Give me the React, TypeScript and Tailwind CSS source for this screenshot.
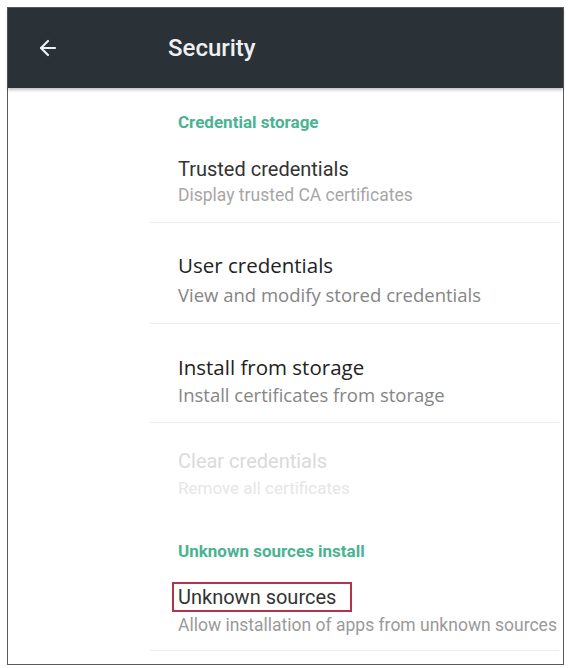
import { ArrowLeft } from "lucide-react";

const roboto = { fontFamily: "Roboto, 'Noto Sans', sans-serif" };
const openSans = { fontFamily: "'Open Sans', 'Noto Sans', sans-serif" };

function Divider({ className = "" }: { className?: string }) {
  return <div className={`ml-[142px] mr-[4px] h-px bg-[#ececec] ${className}`} />;
}

export default function App() {
  return (
    <div className="h-[668px] w-[568px] bg-white pl-[7px] pt-[7px]" style={roboto}>
      <div className="flex h-[658px] w-[557px] flex-col border border-[#5a5a5a] bg-white">
        {/* app bar */}
        <div className="flex h-[80px] shrink-0 items-center bg-[#2a3238] shadow-[0_2px_3px_rgba(0,0,0,0.25)]">
          <ArrowLeft className="ml-[28px] h-[24px] w-[24px] text-[#eef0f2]" strokeWidth={2.2} />
          <span className="ml-[108px] text-[24px] font-medium text-[#eef0f2]">Security</span>
        </div>

        <div className="flex flex-col">
          <div className="mt-[22px] pl-[170px] text-[17px] font-bold leading-[24px] text-[#4ab391]">
            Credential storage
          </div>

          <div className="mt-[23px] pl-[170px] text-[20px] leading-[24px] text-[#333]">Trusted credentials</div>
          <div className="mt-[4px] pl-[170px] text-[17.5px] leading-[20px] text-[#a6a6a6]">
            Display trusted CA certificates
          </div>
          <Divider className="mt-[17px]" />

          <div className="mt-[28px] pl-[170px] text-[20.5px] leading-[28px] text-[#222]" style={openSans}>
            User credentials
          </div>
          <div className="mt-[5px] pl-[170px] text-[18.5px] leading-[22px] text-[#858585]" style={openSans}>
            View and modify stored credentials
          </div>
          <Divider className="mt-[17px]" />

          <div className="mt-[29px] pl-[170px] text-[20.5px] leading-[28px] text-[#222]" style={openSans}>
            Install from storage
          </div>
          <div className="mt-[3px] pl-[170px] text-[18.5px] leading-[22px] text-[#858585]" style={openSans}>
            Install certificates from storage
          </div>
          <Divider className="mt-[16px]" />

          <div className="mt-[26px] pl-[170px] text-[20px] leading-[24px] text-[#dadada]">Clear credentials</div>
          <div className="mt-[5px] pl-[170px] text-[17px] leading-[20px] text-[#e6e6e6]">Remove all certificates</div>

          <div className="mt-[41px] pl-[170px] text-[17px] font-bold leading-[24px] text-[#4ab391]">
            Unknown sources install
          </div>

          <div className="mt-[19px] pl-[164px]">
            <div className="inline-block w-[180px] border-2 border-[#b3324c] pl-[4px] text-[20px] leading-[26px] text-[#333]">
              Unknown sources
            </div>
          </div>
          <div className="mt-[3px] pl-[170px] text-[17.5px] leading-[20px] text-[#9a9a9a]">
            Allow installation of apps from unknown sources
          </div>
          <Divider className="mt-[15px]" />
        </div>
      </div>
    </div>
  );
}
